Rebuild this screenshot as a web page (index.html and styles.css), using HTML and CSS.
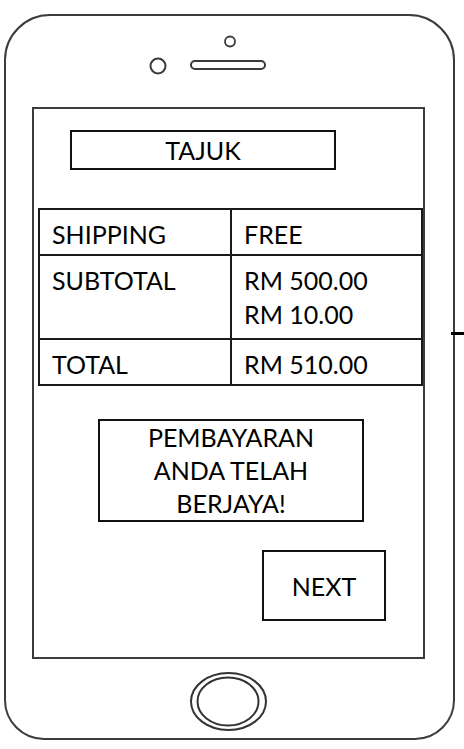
FILE: index.html
```html
<!DOCTYPE html>
<html lang="ms">
<head>
<meta charset="utf-8">
<title>Pembayaran</title>
<link rel="stylesheet" href="styles.css">
</head>
<body>
<div class="phone">
  <svg class="phone-top" width="445" height="91" viewBox="0 0 445 91" aria-hidden="true">
    <circle cx="224" cy="25.5" r="5" fill="none" stroke="#3a3a3a" stroke-width="1.8"/>
    <circle cx="152" cy="50" r="7.5" fill="none" stroke="#3a3a3a" stroke-width="2"/>
    <rect x="185" y="45" width="74" height="8" rx="4" fill="none" stroke="#3a3a3a" stroke-width="2"/>
  </svg>
  <div class="screen">
    <div class="title-box">TAJUK</div>
    <div class="summary">
      <div class="cell">SHIPPING</div>
      <div class="cell">FREE</div>
      <div class="cell">SUBTOTAL</div>
      <div class="cell">RM 500.00<br>RM 10.00</div>
      <div class="cell">TOTAL</div>
      <div class="cell">RM 510.00</div>
    </div>
    <div class="message">PEMBAYARAN<br>ANDA TELAH<br>BERJAYA!</div>
    <div class="next">NEXT</div>
  </div>
  <div class="phone-bottom">
    <svg width="445" height="79" viewBox="0 0 445 79" aria-hidden="true">
      <ellipse cx="222.5" cy="42.5" rx="37.5" ry="28.5" fill="none" stroke="#333" stroke-width="2"/>
      <ellipse cx="222" cy="42.5" rx="30.5" ry="24" fill="none" stroke="#333" stroke-width="2"/>
    </svg>
  </div>
</div>
</body>
</html>
```
FILE: styles.css
```css
html, body {
  margin: 0;
  padding: 0;
  background: #fff;
}

body {
  font-family: Lato, "Open Sans", "Liberation Sans", sans-serif;
  color: #000;
  width: 464px;
  height: 749px;
  overflow: hidden;
}

.phone {
  position: relative;
  box-sizing: border-box;
  margin: 14px 0 0 4px;
  width: 451px;
  height: 726px;
  border: 2px solid #3c3c3c;
  border-radius: 46px 46px 40px 40px;
  display: flex;
  flex-direction: column;
}

.phone::after {
  content: "";
  position: absolute;
  left: 445px;
  top: 316px;
  width: 15px;
  height: 3px;
  background: #000;
}

.phone-top {
  display: block;
  flex: 0 0 91px;
}

.screen {
  box-sizing: border-box;
  margin-left: 26px;
  width: 393px;
  height: 552px;
  border: 2px solid #3c3c3c;
  display: flex;
  flex-direction: column;
  align-items: flex-start;
}

.title-box {
  box-sizing: border-box;
  margin: 21px 0 0 36px;
  width: 266px;
  height: 40px;
  border: 2px solid #111;
  font-size: 25px;
  line-height: 36px;
  text-align: center;
}

.summary {
  margin: 38px 0 0 4px;
  display: grid;
  grid-template-columns: 190px 189px;
  grid-template-rows: 44px 82px 44px;
  gap: 2px;
  padding: 2px;
  background: #1a1a1a;
}

.cell {
  background: #fff;
  box-sizing: border-box;
  padding: 7px 0 0 12px;
  font-size: 25px;
  line-height: 34px;
}

.message {
  box-sizing: border-box;
  margin: 33px 0 0 64px;
  width: 266px;
  height: 103px;
  border: 2px solid #111;
  font-size: 25px;
  line-height: 33px;
  text-align: center;
}

.next {
  box-sizing: border-box;
  margin: 28px 0 0 228px;
  width: 124px;
  height: 71px;
  border: 2px solid #111;
  font-size: 25px;
  display: flex;
  align-items: center;
  justify-content: center;
}

.phone-bottom {
  flex: 1;
}

.phone-bottom svg {
  display: block;
}
```
